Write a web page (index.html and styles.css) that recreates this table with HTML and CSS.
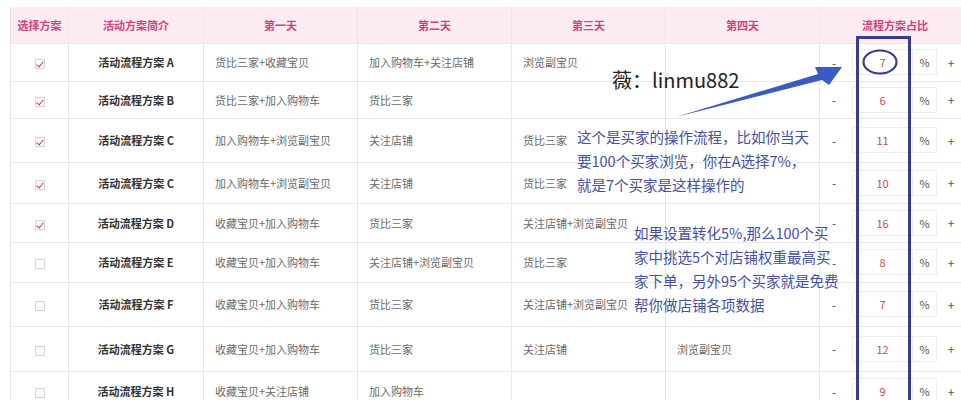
FILE: index.html
```html
<!DOCTYPE html>
<html lang="zh-CN">
<head>
<meta charset="utf-8">
<title>活动流程方案</title>
<link rel="stylesheet" href="styles.css">
</head>
<body>
<div class="page">
  <table class="plan">
    <colgroup>
      <col class="c-sel"><col class="c-name"><col class="c-day"><col class="c-day"><col class="c-day"><col class="c-day"><col class="c-ratio">
    </colgroup>
    <thead>
      <tr><th>选择方案</th><th>活动方案简介</th><th>第一天</th><th>第二天</th><th>第三天</th><th>第四天</th><th>流程方案占比</th></tr>
    </thead>
    <tbody>
      <tr><td class="sel"><span class="cb on"></span></td><td class="name">活动流程方案 A</td><td>货比三家+收藏宝贝</td><td>加入购物车+关注店铺</td><td>浏览副宝贝</td><td></td>
        <td><div class="stepper"><span class="btn">-</span><span class="num">7</span><span class="pct">%</span><span class="btn">+</span></div></td></tr>
      <tr><td class="sel"><span class="cb on"></span></td><td class="name">活动流程方案 B</td><td>货比三家+加入购物车</td><td>货比三家</td><td></td><td></td>
        <td><div class="stepper"><span class="btn">-</span><span class="num">6</span><span class="pct">%</span><span class="btn">+</span></div></td></tr>
      <tr><td class="sel"><span class="cb on"></span></td><td class="name">活动流程方案 C</td><td>加入购物车+浏览副宝贝</td><td>关注店铺</td><td>货比三家</td><td></td>
        <td><div class="stepper"><span class="btn">-</span><span class="num">11</span><span class="pct">%</span><span class="btn">+</span></div></td></tr>
      <tr><td class="sel"><span class="cb on"></span></td><td class="name">活动流程方案 C</td><td>加入购物车+浏览副宝贝</td><td>关注店铺</td><td>货比三家</td><td></td>
        <td><div class="stepper"><span class="btn">-</span><span class="num">10</span><span class="pct">%</span><span class="btn">+</span></div></td></tr>
      <tr><td class="sel"><span class="cb on"></span></td><td class="name">活动流程方案 D</td><td>收藏宝贝+加入购物车</td><td>货比三家</td><td>关注店铺+浏览副宝贝</td><td></td>
        <td><div class="stepper"><span class="btn">-</span><span class="num">16</span><span class="pct">%</span><span class="btn">+</span></div></td></tr>
      <tr><td class="sel"><span class="cb"></span></td><td class="name">活动流程方案 E</td><td>收藏宝贝+加入购物车</td><td>关注店铺+浏览副宝贝</td><td>货比三家</td><td></td>
        <td><div class="stepper"><span class="btn">-</span><span class="num">8</span><span class="pct">%</span><span class="btn">+</span></div></td></tr>
      <tr><td class="sel"><span class="cb"></span></td><td class="name">活动流程方案 F</td><td>收藏宝贝+加入购物车</td><td>货比三家</td><td>关注店铺+浏览副宝贝</td><td></td>
        <td><div class="stepper"><span class="btn">-</span><span class="num">7</span><span class="pct">%</span><span class="btn">+</span></div></td></tr>
      <tr><td class="sel"><span class="cb"></span></td><td class="name">活动流程方案 G</td><td>收藏宝贝+加入购物车</td><td>货比三家</td><td>关注店铺</td><td>浏览副宝贝</td>
        <td><div class="stepper"><span class="btn">-</span><span class="num">12</span><span class="pct">%</span><span class="btn">+</span></div></td></tr>
      <tr><td class="sel"><span class="cb"></span></td><td class="name">活动流程方案 H</td><td>收藏宝贝+关注店铺</td><td>加入购物车</td><td></td><td></td>
        <td><div class="stepper"><span class="btn">-</span><span class="num">9</span><span class="pct">%</span><span class="btn">+</span></div></td></tr>
    </tbody>
  </table>

  <svg class="marks" width="961" height="400" viewBox="0 0 961 400">
    <rect x="857.5" y="37.5" width="52" height="380" fill="none" stroke="#383c8c" stroke-width="3"/>
    <ellipse cx="880" cy="62" rx="16.5" ry="11.5" fill="none" stroke="#383c8c" stroke-width="2.2"/>
    <polygon points="676,117 818,74 815,67 842,67 829,85 822,80" fill="#3a5ac6"/>
  </svg>
  <div class="note wechat">薇：linmu882</div>
  <div class="note blue n1">这个是买家的操作流程，比如你当天<br>要100个买家浏览，你在A选择7%，<br>就是7个买家是这样操作的</div>
  <div class="note blue n2">如果设置转化5%,那么100个买<br>家中挑选5个对店铺权重最高买<br>家下单，另外95个买家就是免费<br>帮你做店铺各项数据</div>
</div>
</body>
</html>
```

FILE: styles.css
```css
* { box-sizing: border-box; }
html, body { margin: 0; padding: 0; background: #fff; overflow: hidden; }
body { width: 961px; height: 400px; font-family: "Noto Sans CJK SC", "Noto Sans", sans-serif; }

.page { position: relative; width: 961px; height: 400px; padding: 7px 0 0 10px; }

.plan { border-collapse: collapse; table-layout: fixed; width: 960px; font-size: 11px; color: #6a6a6a; }
.c-sel { width: 58px; }
.c-name { width: 135px; }
.c-day { width: 154px; }
.c-ratio { width: 151px; }

.plan th, .plan td { border: 1px solid #e8e8e8; padding: 0 0 0 11px; text-align: left; white-space: nowrap; overflow: hidden; }
.plan th { background: #fcecf2; color: #d2417c; font-weight: bold; text-align: center; padding: 0; height: 36px; border-color: #f3e2e8; border-top: none; }
.plan thead tr th:first-child { border-left: 1px solid #eadde2; }
.plan td.sel, .plan td.name { text-align: center; padding: 0; }
.plan td.name { color: #333; font-weight: bold; }
.plan td:last-child { padding: 0; }

.plan tbody tr:nth-child(1) td { height: 38px; }
.plan tbody tr:nth-child(2) td { height: 37px; }
.plan tbody tr:nth-child(3) td { height: 44px; }
.plan tbody tr:nth-child(4) td { height: 41px; }
.plan tbody tr:nth-child(5) td { height: 39px; }
.plan tbody tr:nth-child(6) td { height: 40px; }
.plan tbody tr:nth-child(7) td { height: 44px; }
.plan tbody tr:nth-child(8) td { height: 45px; }
.plan tbody tr:nth-child(9) td { height: 40px; }

.cb { display: inline-block; width: 10px; height: 10px; border: 1px solid #d6d6d6; background: #fafafa; position: relative; vertical-align: middle; }
.cb.on::after { content: ""; position: absolute; left: 2px; top: 0; width: 3px; height: 6px; border: solid #c23a70; border-width: 0 1.5px 1.5px 0; transform: rotate(40deg); }

.stepper { display: flex; align-items: center; height: 26px; }
.stepper .btn { width: 28px; text-align: center; color: #555; font-size: 12px; }
.stepper .btn:last-child { width: 28px; }
.stepper .num { width: 61px; height: 26px; margin-left: 4px; border: 1px solid #eee; display: flex; align-items: center; justify-content: center; color: #c0504f; font-size: 11px; }
.stepper .pct { width: 24px; height: 26px; border: 1px solid #eee; border-left: none; display: flex; align-items: center; justify-content: center; color: #555; font-size: 11px; }

.marks { position: absolute; left: 0; top: 0; pointer-events: none; }

.note { position: absolute; white-space: nowrap; }
.wechat { left: 612px; top: 68px; font-size: 20px; line-height: 24px; color: #222; font-family: "Noto Sans CJK SC", "Noto Sans", sans-serif; }
.blue { color: #45509e; font-size: 14.5px; line-height: 24px; }
.n1 { left: 577px; top: 125px; }
.n2 { left: 634px; top: 221px; }
```
